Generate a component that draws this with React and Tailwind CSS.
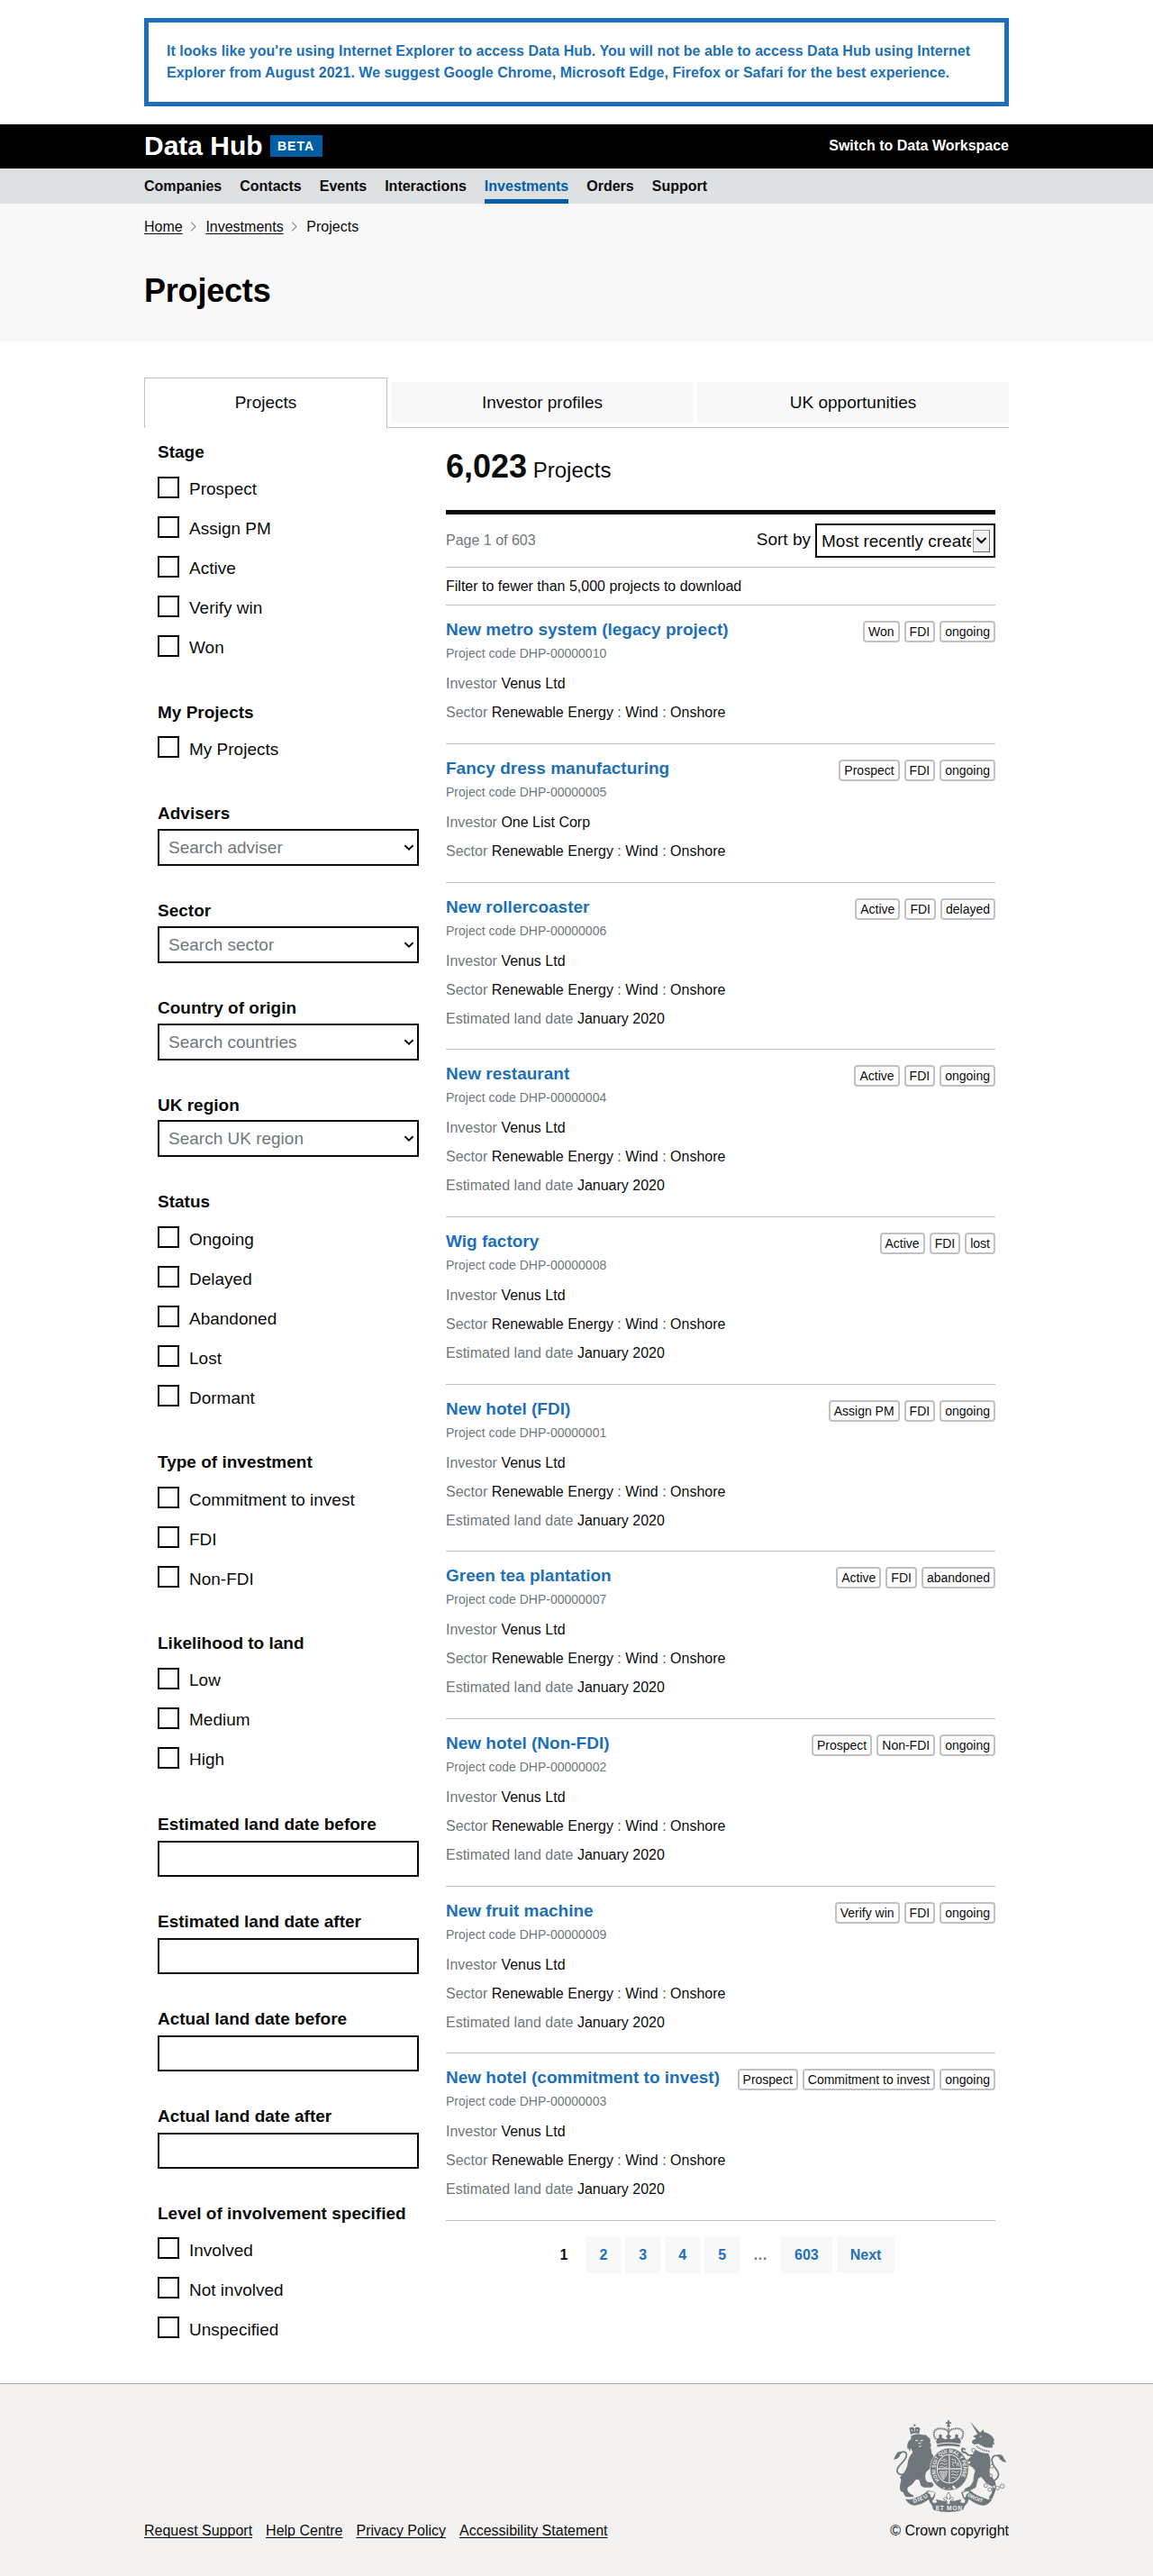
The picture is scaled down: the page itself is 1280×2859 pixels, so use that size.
import React from 'react';

const stages = ['Prospect', 'Assign PM', 'Active', 'Verify win', 'Won'];

const sector = ['Renewable Energy', 'Wind', 'Onshore'];

const projects = [
  { name: 'New metro system (legacy project)', code: 'DHP-00000010', investor: 'Venus Ltd', tags: ['Won', 'FDI', 'ongoing'] },
  { name: 'Fancy dress manufacturing', code: 'DHP-00000005', investor: 'One List Corp', tags: ['Prospect', 'FDI', 'ongoing'] },
  { name: 'New rollercoaster', code: 'DHP-00000006', investor: 'Venus Ltd', landDate: 'January 2020', tags: ['Active', 'FDI', 'delayed'] },
  { name: 'New restaurant', code: 'DHP-00000004', investor: 'Venus Ltd', landDate: 'January 2020', tags: ['Active', 'FDI', 'ongoing'] },
  { name: 'Wig factory', code: 'DHP-00000008', investor: 'Venus Ltd', landDate: 'January 2020', tags: ['Active', 'FDI', 'lost'] },
  { name: 'New hotel (FDI)', code: 'DHP-00000001', investor: 'Venus Ltd', landDate: 'January 2020', tags: ['Assign PM', 'FDI', 'ongoing'] },
  { name: 'Green tea plantation', code: 'DHP-00000007', investor: 'Venus Ltd', landDate: 'January 2020', tags: ['Active', 'FDI', 'abandoned'] },
  { name: 'New hotel (Non-FDI)', code: 'DHP-00000002', investor: 'Venus Ltd', landDate: 'January 2020', tags: ['Prospect', 'Non-FDI', 'ongoing'] },
  { name: 'New fruit machine', code: 'DHP-00000009', investor: 'Venus Ltd', landDate: 'January 2020', tags: ['Verify win', 'FDI', 'ongoing'] },
  { name: 'New hotel (commitment to invest)', code: 'DHP-00000003', investor: 'Venus Ltd', landDate: 'January 2020', tags: ['Prospect', 'Commitment to invest', 'ongoing'] },
];

function CheckGroup({ title, items, className = '', titleClass = 'leading-[25px]', listClass = 'mt-[15px]', labelClass = 'leading-[29px]' }) {
  return (
    <section className={className}>
      <h2 className={`text-[19px] font-bold ${titleClass}`}>{title}</h2>
      <ul className={`flex flex-col gap-5 ${listClass}`}>
        {items.map((item) => (
          <li key={item} className="flex h-6 items-start">
            <span className="h-6 w-6 shrink-0 border-2 border-black bg-white" />
            <span className={`ml-[11px] text-[19px] ${labelClass}`}>{item}</span>
          </li>
        ))}
      </ul>
    </section>
  );
}

function SelectGroup({ title, placeholder, className = 'h-[108px]', boxClass = 'mt-[5px]' }) {
  return (
    <section className={className}>
      <h2 className="text-[19px] leading-[25px] font-bold">{title}</h2>
      <div className={`flex h-[41px] items-center justify-between border-2 border-[#0b0c0c] pr-[3px] pl-[10px] ${boxClass}`}>
        <span className="text-[19px] leading-[37px] text-[#6f777b]">{placeholder}</span>
        <svg width="12" height="8" viewBox="0 0 12 8" fill="none" stroke="#0b0c0c" strokeWidth="2">
          <path d="M1.4 1.3 6 5.7 10.6 1.3" />
        </svg>
      </div>
    </section>
  );
}

function DateGroup({ title }) {
  return (
    <section className="h-[108px]">
      <h2 className="text-[19px] leading-[25px] font-bold">{title}</h2>
      <div className="mt-[6px] h-10 border-2 border-[#0b0c0c]" />
    </section>
  );
}

function Meta({ label, children }) {
  return (
    <div className="h-8 text-base leading-[33px]">
      <span className="text-[#6f777b]">{label}</span> {children}
    </div>
  );
}

function Project({ project }) {
  return (
    <li className={`border-b border-[#bfc1c3] ${project.landDate ? 'h-[185.7px]' : 'h-[153.8px]'}`}>
      <div className="flex justify-between">
        <div className="pt-[14px]">
          <h3 className="text-[19px] leading-[25px] font-bold whitespace-nowrap text-[#1d70b8]">{project.name}</h3>
          <p className="text-sm leading-7 text-[#6f777b]">Project code {project.code}</p>
        </div>
        <div className="flex gap-[5px] pt-[17px]">
          {project.tags.map((tag) => (
            <span key={tag} className="h-6 rounded-[4px] border-2 border-[#bfc1c3] px-1 text-sm leading-5 whitespace-nowrap">
              {tag}
            </span>
          ))}
        </div>
      </div>
      <div className="mt-[3px]">
        <Meta label="Investor">{project.investor}</Meta>
        <Meta label="Sector">
          {sector.map((part, i) => (
            <React.Fragment key={part}>
              {i > 0 && <span className="text-[#505a5f]"> : </span>}
              {part}
            </React.Fragment>
          ))}
        </Meta>
        {project.landDate && <Meta label="Estimated land date">{project.landDate}</Meta>}
      </div>
    </li>
  );
}

function Chevron() {
  return (
    <svg className="mt-[20px] mr-[10px] ml-[8.7px]" width="7" height="11" viewBox="0 0 7 11" fill="none" stroke="#8a9094" strokeWidth="1.2">
      <path d="M1.2.7 6 5.5 1.2 10.3" />
    </svg>
  );
}

function Crest() {
  const ink = '#6f777b';
  const paper = '#f3f2f1';
  return (
    <svg width="125" height="103" viewBox="12 12 375 309" fill={ink} fontFamily="Liberation Sans, sans-serif" fontWeight="700">
      {/* crown */}
      <circle cx="195" cy="31" r="5" />
      <path d="M192 13h6v6h6v5h-6v6h-6v-6h-6v-5h6z" />
      <path d="M153 76c-14-20-5-36 13-36 14 0 25 4 29 12 4-8 15-12 29-12 18 0 27 16 13 36" fill="none" stroke={ink} strokeWidth="6" strokeDasharray="4 1.6" />
      <path d="M195 38v36" fill="none" stroke={ink} strokeWidth="5" strokeDasharray="4 1.6" />
      <path d="M156 82l0-8 8-4-2-6 6-6 6 6-2 6 8 4 6 6 5-8-5-6 9-9 9 9-5 6 5 8 6-6 8-4-2-6 6-6 6 6-2 6 8 4v8z" />
      <path d="M153 80q42-12 84 0l-3 11q-39-9-78 0z" />
      <path d="M157 94q38-9 76 0l-1 7q-37-7-74 0z" />
      {/* lion crown */}
      <circle cx="82" cy="29" r="3.5" />
      <path d="M65 42q0-7 8-7 6 0 9 5 3-5 9-5 9 0 9 8l-3 14q-14-4-28 3z" />
      <path d="M71 42l3 8m8-10v9m10-7l-2 7" stroke={paper} strokeWidth="2.5" />
      {/* lion */}
      <path d="M70 65C82 58 97 57 107 61c11-2 18 2 20 8 6 3 8 8 8 14l-3 1c5 6 6 12 4 18l-3-1c5 8 6 14 5 20l8 12c0 7-5 14-7 19 1 10-2 17-6 22-8 7-12 9-14 15-3 14-1 23 5 28 7 4 16 0 19 6l2 7-7 6H112l-9-6-5-16c-2-7-10-6-15 0-6 10-12 15-21 20-5 4-6 10 0 18 6 8 18 8 17 16H58c-9 0-11-9-14-16-5-2-10-3-11-13-1-10 3-20 4-29l-4-8c10-9 20-20 25-40 2-20 8-32 18-43l-7-14-3 12-6-13-1 6c-4-15 0-29 11-34z" />
      <path d="M84 79l10 2m7 0l9-2M94 88l6 2 4-3M96 99q5 3 9-1" stroke={paper} strokeWidth="3" fill="none" />
      <path d="M58 176c-6 24-41 22-33-2 6-17 30-27 30-46 0-11-12-14-20-6" fill="none" stroke={ink} strokeWidth="5" />
      <path d="M41 117c-10-2-19 3-22 12l-7 14c11-1 17-5 20-11 2-8 8-9 9-15z" />
      {/* unicorn */}
      <path d="M268 18l5 5 28 32-7 7z" />
      <path d="M276 66l18-9 9-6 8-8 2 9c16 3 31 14 35 28l-3 1 3 12-6-1-1 12-25-1-22-12-12 2-8-4-1-8 14-8z" />
      <path d="M299 67l6-1" stroke={paper} strokeWidth="3" />
      <path d="M288 98q18 16 44 18" fill="none" stroke={ink} strokeWidth="6" strokeDasharray="3 2.5" />
      <path d="M285 110c15 9 28 12 42 13 8 11 8 21 7 34 0 15-4 24-1 35l17 24c4 13 4 27-2 40l-7 17-10 4-1-9 9-13 2-21-21-13-16-20-10 5-8 30-20 11-20 1 4-8 18-9 10-17c-1-13 3-24 6-34-6-9-14-14-20-18-1 8-6 12-13 14l-4-7 7-14c-10-3-19-3-22-11l-2-9 9-3 6 7 14 5 14-14z" />
      <path d="M251 111q-9-8-12-1l3 8 9 2 10 8 16 1" fill="none" stroke={ink} strokeWidth="6" />
      <path d="M341 218c26-16 24-28 13-42-15-16-19-37-8-44 10-6 22 1 23 12" fill="none" stroke={ink} strokeWidth="5" />
      <path d="M357 128c11-4 22 3 22 11l9 13c-11-1-18-3-20-12-2-6-10-6-11-12z" />
      <g fill={paper} stroke={ink} strokeWidth="2.5">
        <circle cx="278" cy="112" r="6" />
        <circle cx="264" cy="153" r="5" />
        <circle cx="339" cy="166" r="6" />
        <circle cx="336" cy="197" r="5" />
        <circle cx="319" cy="230" r="6" />
        <circle cx="332" cy="243" r="6" />
        <circle cx="347" cy="234" r="5" />
        <circle cx="358" cy="238" r="6" />
        <circle cx="374" cy="232" r="7" />
      </g>
      {/* garter and arms */}
      <ellipse cx="197.500" cy="176" rx="64" ry="71" stroke={paper} strokeWidth="2" />
      <ellipse cx="197.500" cy="174" rx="42" ry="49" fill={paper} />
      <ellipse cx="197.500" cy="174" rx="39" ry="46" />
      <defs>
        <path id="garter" d="M165 212A46 53 0 1 1 230 212" />
        <path id="ribbonLeft" d="M79 288q28 -6 56 -26" />
        <path id="ribbonRight" d="M257 264q24 17 54 23" />
      </defs>
      <text fontSize="18" fill={paper}>
        <textPath href="#garter" textLength="222" lengthAdjust="spacingAndGlyphs">HONI SOIT QUI MAL Y PENSE</textPath>
      </text>
      <g fill={paper}>
        <circle cx="180" cy="238" r="2.500" />
        <circle cx="198" cy="240" r="2.500" />
        <path d="M211 229l9 9-7 5-6-9z" />
      </g>
      <path d="M197.500 129v90M158 174h79" stroke={paper} strokeWidth="4" />
      <path d="M197.500 129v90M158 174h79" stroke={ink} strokeWidth="1" />
      <g stroke={paper} strokeWidth="2.4" fill="none">
        <path d="M168 148q6-5 11 0t12-2M166 158q7-5 12 0t13-2M166 168q7-5 12 0t13-2M176 140l3 3 8-1" />
        <path d="M205 142q8 0 14 5l-2 7 8 3-2 8M206 151l7 3-5 6 6 6M227 152l3 14" />
        <path d="M204 184q7-5 12 0t14-2M204 194q7-5 12 0t12-2M205 204q6-5 10 0t9-2" />
        <path d="M166 183q12 2 24-1-1 20-12 28-10-11-12-27M172 184l3 18M178 184v22M184 184l-2 16" />
      </g>
      {/* ribbons */}
      <path d="M55 275q14 3 25-3 24-5 46-25 15 0 26 7l-4 17-7 10 6 17q-9-3-13-10l-5-12q-22 17-46 20-18 0-32-21z" />
      <path d="M341 275q-14 3-25-3-26-6-49-26-17-1-30 7l6 17 8 10-7 18q10-3 14-11l5-12q23 18 47 21 18-1 31-21z" />
      <path d="M128 250q15-2 22 5l-8 15-7-2q2-10-10-14zM264 249q-14-1-22 5l6 16 5-2q-2-9 9-14z" fill={paper} />
      <path d="M136 286q12 5 21-1l-5-10q43 14 87 0l-5 10q10 6 20 1l-11 25q-48 14-98 0z" />
      <text fontSize="18.500" fill={paper}>
        <textPath href="#ribbonLeft" textLength="52">DIEU</textPath>
      </text>
      <text fontSize="17" fill={paper}>
        <textPath href="#ribbonRight" textLength="56" lengthAdjust="spacingAndGlyphs">DROIT</textPath>
      </text>
      <text x="152" y="311" fontSize="20" textLength="88" fill={paper}>ET MON</text>
      {/* fleur-de-lis */}
      <path d="M195 252l7 12-4 12q4-8 10-7 6 3 1 9l-8 1 3 3-5 2 3 8h-14l3-8-5-2 3-3-8-1q-5-6 1-9 6-1 10 7l-4-12z" fill={paper} stroke={ink} strokeWidth="2.4" />
    </svg>
  );
}

export default function App() {
  return (
    <div className="min-h-[2859px] bg-white font-['Liberation_Sans',Arial,sans-serif] text-[#0b0c0c]">
      <div className="mx-auto w-[960px] pt-5">
        <div className="h-[98px] border-[5px] border-[#1d70b8] px-5 pt-5 text-base leading-6 font-bold tracking-[0.02px] text-[#1d70b8]">
          <p>It looks like you're using Internet Explorer to access Data Hub. You will not be able to access Data Hub using Internet Explorer from August 2021. We suggest Google Chrome, Microsoft Edge, Firefox or Safari for the best experience.</p>
        </div>
      </div>

      <header className="mt-5">
        <div className="h-[49px] bg-black text-white">
          <div className="mx-auto flex w-[960px] items-start">
            <span className="w-[140px] text-[30px] leading-[47px] font-bold">Data Hub</span>
            <span className="mt-3 h-6 w-[58px] bg-[#005ea5] pl-2 text-sm leading-6 font-bold tracking-[1px]">BETA</span>
            <span className="ml-auto text-base leading-[47px] font-bold">Switch to Data Workspace</span>
          </div>
        </div>
        <nav className="h-[39px] bg-[#dee0e2]">
          <div className="mx-auto flex w-[960px] gap-5 text-base leading-[39px] font-bold">
            <a>Companies</a>
            <a>Contacts</a>
            <a>Events</a>
            <a>Interactions</a>
            <a className="flex h-[39px] flex-col text-[#005ea5]">
              <span className="h-[34px]">Investments</span>
              <span className="h-[5px] bg-[#005ea5]" />
            </a>
            <a>Orders</a>
            <a>Support</a>
          </div>
        </nav>
      </header>

      <div className="h-[153px] bg-[#f8f8f8]">
        <div className="mx-auto w-[960px]">
          <div className="flex h-[51px] items-start text-base leading-[51px]">
            <a className="underline decoration-1 underline-offset-2 [text-decoration-skip-ink:none]">Home</a>
            <Chevron />
            <a className="underline decoration-1 underline-offset-2 [text-decoration-skip-ink:none]">Investments</a>
            <Chevron />
            <span>Projects</span>
          </div>
          <h1 className="text-4xl leading-[91px] font-bold tracking-[-0.2px] text-black">Projects</h1>
        </div>
      </div>

      <main className="mx-auto h-[2266px] w-[960px] pt-10">
        <div className="flex h-14 items-start gap-[5px] border-b border-[#bfc1c3] text-center text-[19px]">
          <div className="h-14 w-[270px] shrink-0 border border-b-0 border-[#bfc1c3] bg-white leading-[53px]">Projects</div>
          <div className="mt-[5px] h-[45px] w-[334px] bg-[#f8f8f8] leading-[45px]">Investor profiles</div>
          <div className="mt-[5px] h-[45px] w-[346px] bg-[#f8f8f8] leading-[45px]">UK opportunities</div>
        </div>

        <div className="flex gap-[30px] px-[15px]">
          <aside className="w-[290px] pt-[13px]">
            <CheckGroup title="Stage" items={stages} className="h-[290px]" titleClass="leading-[27px]" listClass="mt-[14px]" labelClass="leading-[27px]" />
            <CheckGroup title="My Projects" items={['My Projects']} className="h-[112px]" listClass="mt-[14px]" />
            <SelectGroup title="Advisers" placeholder="Search adviser" />
            <SelectGroup title="Sector" placeholder="Search sector" />
            <SelectGroup title="Country of origin" placeholder="Search countries" />
            <SelectGroup title="UK region" placeholder="Search UK region" className="h-[107px]" boxClass="mt-1" />
            <CheckGroup title="Status" items={['Ongoing', 'Delayed', 'Abandoned', 'Lost', 'Dormant']} className="h-[289px]" />
            <CheckGroup title="Type of investment" items={['Commitment to invest', 'FDI', 'Non-FDI']} className="h-[201px]" />
            <CheckGroup title="Likelihood to land" items={['Low', 'Medium', 'High']} className="h-[201px]" labelClass="leading-[27px]" />
            <DateGroup title="Estimated land date before" />
            <DateGroup title="Estimated land date after" />
            <DateGroup title="Actual land date before" />
            <DateGroup title="Actual land date after" />
            <CheckGroup title="Level of involvement specified" items={['Involved', 'Not involved', 'Unspecified']} listClass="mt-[14px]" />
          </aside>

          <section className="w-[610px]">
            <div className="h-24 border-b-[5px] border-[#0b0c0c] text-4xl leading-[85px] font-bold">
              6,023<span className="text-2xl leading-none font-normal"> Projects</span>
            </div>
            <div className="flex h-[59px] items-start border-b border-[#bfc1c3]">
              <span className="text-base leading-[57px] text-[#6f777b]">Page 1 of 603</span>
              <span className="mr-[5px] ml-auto text-[19px] leading-[55px]">Sort by</span>
              <div className="mt-[10px] flex h-[38px] w-[200px] items-start border-2 border-[#0b0c0c] pl-[5px]">
                <span className="h-[34px] w-[166px] overflow-hidden text-[19px] leading-[35px] whitespace-nowrap">Most recently created</span>
                <span className="mt-[5px] ml-[2px] flex h-[25px] w-[19px] items-center justify-center border border-t-[#a0a0a0] border-r-[#696969] border-b-[#696969] border-l-[#a0a0a0] bg-[#f0f0f0]">
                  <svg width="13" height="9" viewBox="0 0 13 9" fill="none" stroke="#000" strokeWidth="2">
                    <path d="M1.500 1 6.500 6 11.500 1" />
                  </svg>
                </span>
              </div>
            </div>
            <p className="h-[42px] border-b border-[#bfc1c3] text-base leading-[41px]">Filter to fewer than 5,000 projects to download</p>
            <ul>
              {projects.map((project) => (
                <Project key={project.code} project={project} />
              ))}
            </ul>
            <div className="mt-[17px] flex justify-center gap-[5px] text-base leading-[41px] font-bold text-[#1d70b8]">
              <span className="px-[15px] text-[#0b0c0c]">1</span>
              <span className="bg-[#f8f8f8] px-[15px]">2</span>
              <span className="bg-[#f8f8f8] px-[15px]">3</span>
              <span className="bg-[#f8f8f8] px-[15px]">4</span>
              <span className="bg-[#f8f8f8] px-[15px]">5</span>
              <span className="px-[10px] text-[#6f777b]">…</span>
              <span className="bg-[#f8f8f8] px-[15px]">603</span>
              <span className="bg-[#f8f8f8] px-[15px]">Next</span>
            </div>
          </section>
        </div>
      </main>

      <footer className="h-[214px] border-t border-[#a1acb2] bg-[#f3f2f1]">
        <div className="mx-auto flex w-[960px] items-end justify-between pt-10">
          <div className="flex gap-[15px] text-base leading-[25px]">
            {['Request Support', 'Help Centre', 'Privacy Policy', 'Accessibility Statement'].map((link) => (
              <a key={link} className="underline decoration-1 underline-offset-2 [text-decoration-skip-ink:none]">
                {link}
              </a>
            ))}
          </div>
          <div className="flex flex-col items-end">
            <div className="mr-[3px] mb-[7px] h-[103px]">
              <Crest />
            </div>
            <span className="text-base leading-[25px]">© Crown copyright</span>
          </div>
        </div>
      </footer>
    </div>
  );
}
